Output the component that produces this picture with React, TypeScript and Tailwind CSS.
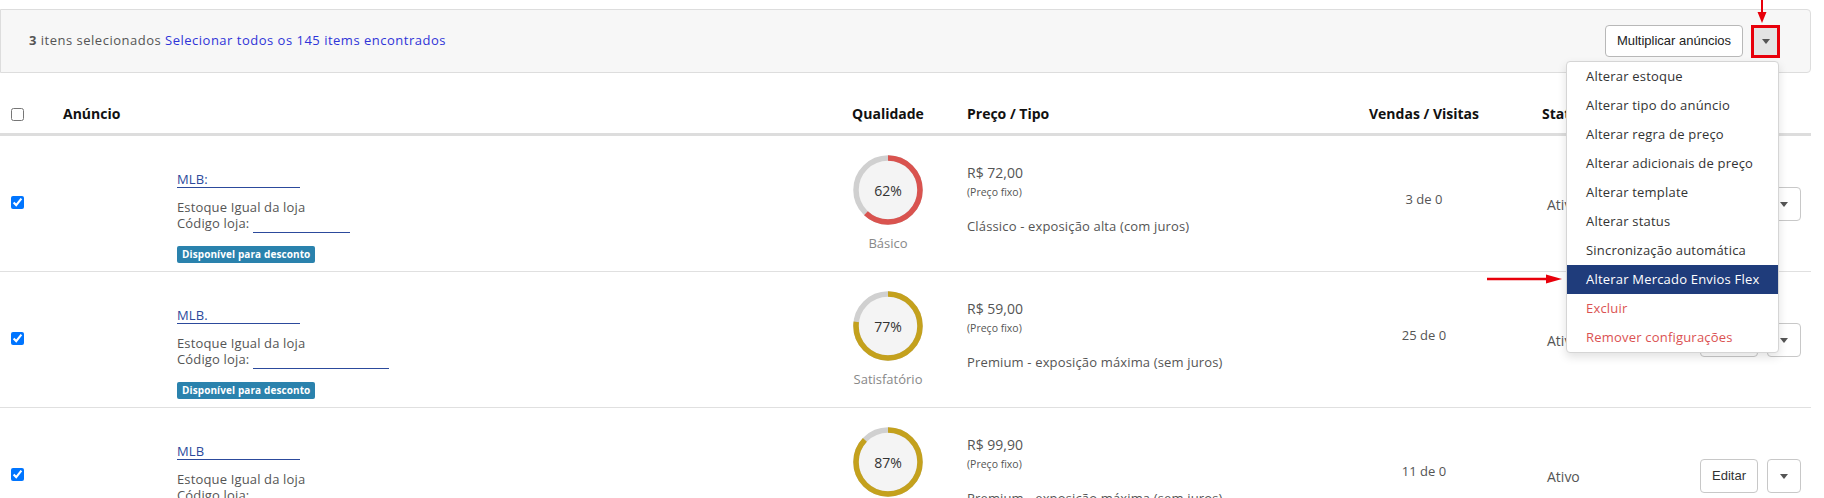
import React from "react";

type Row = {
  mlb: string;
  codeW: number;
  pct: number;
  color: string;
  label: string;
  price: string;
  plan: string;
  vendas: string;
};

const rows: Row[] = [
  {
    mlb: "MLB:",
    codeW: 97,
    pct: 62,
    color: "#d9534f",
    label: "Básico",
    price: "R$ 72,00",
    plan: "Clássico - exposição alta (com juros)",
    vendas: "3 de 0",
  },
  {
    mlb: "MLB.",
    codeW: 136,
    pct: 77,
    color: "#c4a11d",
    label: "Satisfatório",
    price: "R$ 59,00",
    plan: "Premium - exposição máxima (sem juros)",
    vendas: "25 de 0",
  },
  {
    mlb: "MLB",
    codeW: 110,
    pct: 87,
    color: "#c4a11d",
    label: "Satisfatório",
    price: "R$ 99,90",
    plan: "Premium - exposição máxima (sem juros)",
    vendas: "11 de 0",
  },
];

const menuItems: { label: string; kind?: "active" | "danger" }[] = [
  { label: "Alterar estoque" },
  { label: "Alterar tipo do anúncio" },
  { label: "Alterar regra de preço" },
  { label: "Alterar adicionais de preço" },
  { label: "Alterar template" },
  { label: "Alterar status" },
  { label: "Sincronização automática" },
  { label: "Alterar Mercado Envios Flex", kind: "active" },
  { label: "Excluir", kind: "danger" },
  { label: "Remover configurações", kind: "danger" },
];

function Caret() {
  return (
    <span className="block w-0 h-0 border-x-[4px] border-x-transparent border-t-[5px] border-t-[#555]" />
  );
}

function Quality({ pct, color, label }: { pct: number; color: string; label: string }) {
  const r = 32;
  const c = 2 * Math.PI * r;
  return (
    <div className="flex flex-col items-center">
      <div className="grid w-[70px] h-[70px]">
        <svg width="70" height="70" viewBox="0 0 70 70" className="col-start-1 row-start-1">
          <circle cx="35" cy="35" r={r} fill="#f4f4f4" stroke="#d0d0d0" strokeWidth="5.5" />
          <circle
            cx="35"
            cy="35"
            r={r}
            fill="none"
            stroke={color}
            strokeWidth="5.5"
            strokeDasharray={`${(c * pct) / 100} ${c}`}
            transform="rotate(-90 35 35)"
          />
        </svg>
        <span className="col-start-1 row-start-1 flex items-center justify-center text-[14px] text-[#333]">
          {pct}%
        </span>
      </div>
      <div className="mt-[9px] text-[13px] leading-[18px] text-[#888]">{label}</div>
    </div>
  );
}

function TableRow({ row }: { row: Row }) {
  return (
    <div className="flex h-[136px] border-b border-[#e0e0e0]">
      <div className="w-[63px] pl-[11px] pt-[60px]">
        <input type="checkbox" checked readOnly className="block m-0 w-[13px] h-[13px]" />
      </div>
      <div className="w-[780px] flex">
        <div className="w-[114px]" />
        <div className="pt-[34px] text-[13px] text-[#555] tracking-[0.15px]">
          <div>
            <span className="inline-block w-[123px] leading-[15px] border-b border-[#2c4a9c] text-[#2c4a9c]">
              {row.mlb}
            </span>
          </div>
          <div className="mt-[9px] leading-[16px]">Estoque Igual da loja</div>
          <div className="leading-[16px]">
            Código loja:{" "}
            <span
              className="inline-block h-0 border-b border-[#2c4a9c] align-[-5px]"
              style={{ width: row.codeW }}
            />
          </div>
          <div className="mt-[13px] inline-block h-[17px] leading-[17px] px-[5px] rounded-[2px] bg-[#2a82ad] text-white text-[10px] font-bold tracking-[0.1px]">
            Disponível para desconto
          </div>
        </div>
      </div>
      <div className="w-[90px] pt-[19px]">
        <Quality pct={row.pct} color={row.color} label={row.label} />
      </div>
      <div className="w-[436px] pl-[34px] pt-[28px] text-[#555]">
        <div className="text-[14px] leading-[18px]">{row.price}</div>
        <div className="mt-[3px] text-[10.5px] leading-[14px]">(Preço fixo)</div>
        <div className="mt-[18px] text-[13px] leading-[18px] tracking-[0.15px]">{row.plan}</div>
      </div>
      <div className="w-[110px] pt-[54px] text-center text-[13px] leading-[18px] text-[#555]">
        {row.vendas}
      </div>
      <div className="w-[211px] pl-[68px] pt-[60px] text-[14px] leading-[18px] text-[#555]">Ativo</div>
      <div className="pl-[10px] pt-[51px] flex gap-[9px]">
        <button className="w-[58px] h-[34px] bg-white border border-[#c8c8c8] rounded-[4px] text-[13px] text-[#333] font-['Liberation_Sans',Arial,sans-serif]">
          Editar
        </button>
        <button className="w-[34px] h-[34px] bg-white border border-[#c8c8c8] rounded-[4px] flex items-center justify-center">
          <Caret />
        </button>
      </div>
    </div>
  );
}

export default function App() {
  return (
    <div className="relative w-[1824px] h-[498px] overflow-hidden bg-white font-['Open_Sans',sans-serif]">
      <div className="w-[1811px]">
        {/* selection bar */}
        <div className="mt-[9px] h-[64px] bg-[#f7f7f7] border border-[#dddddd] rounded-r-[4px] flex items-center justify-between pl-[28px] pr-[30px]">
          <div className="text-[13px] text-[#555] tracking-[0.5px]">
            <span className="font-bold">3</span> itens selecionados{" "}
            <span className="text-[#2f34d8]">Selecionar todos os 145 items encontrados</span>
          </div>
          <div className="flex items-center gap-[8px]">
            <button className="w-[138px] h-[32px] bg-white border border-[#b8b8b8] rounded-[4px] text-[13px] text-[#222] font-['Liberation_Sans',Arial,sans-serif]">
              Multiplicar anúncios
            </button>
            <button className="w-[29px] h-[33px] bg-[#e4e4e4] border-[3px] border-[#e8000b] flex items-center justify-center">
              <Caret />
            </button>
          </div>
        </div>

        {/* header */}
        <div className="flex h-[63px] border-b-[3px] border-[#dddddd] text-[14px] font-bold text-[#111] leading-[18px]">
          <div className="w-[63px] pl-[11px] pt-[35px]">
            <input type="checkbox" readOnly className="block m-0 w-[13px] h-[13px]" />
          </div>
          <div className="w-[780px] pt-[32px]">Anúncio</div>
          <div className="w-[90px] pt-[32px] text-center">Qualidade</div>
          <div className="w-[436px] pl-[34px] pt-[32px]">Preço / Tipo</div>
          <div className="w-[110px] pt-[32px] text-center">Vendas / Visitas</div>
          <div className="w-[211px] pl-[63px] pt-[32px]">Status</div>
        </div>

        {rows.map((r, i) => (
          <TableRow key={i} row={r} />
        ))}
      </div>

      {/* dropdown menu */}
      <div className="absolute left-[1566px] top-[61px] w-[213px] bg-white border border-[#d5d5d5] rounded-[4px] shadow-[0_4px_10px_rgba(0,0,0,0.12)] text-[13px] tracking-[0.2px]">
        {menuItems.map((m) => (
          <div
            key={m.label}
            className={
              m.kind === "active"
                ? "h-[29px] leading-[29px] pl-[19px] bg-[#1f3c7b] text-white"
                : m.kind === "danger"
                ? "h-[29px] leading-[29px] pl-[19px] text-[#db5252]"
                : "h-[29px] leading-[29px] pl-[19px] text-[#333]"
            }
          >
            {m.label}
          </div>
        ))}
      </div>

      {/* red arrow pointing down */}
      <svg className="absolute left-[1755px] top-0" width="14" height="25" viewBox="0 0 14 25">
        <line x1="7" y1="0" x2="7" y2="16" stroke="#e8000b" strokeWidth="2" />
        <polygon points="2.5,12 11.5,12 7,23" fill="#e8000b" />
      </svg>

      {/* red arrow pointing right */}
      <svg className="absolute left-[1486px] top-[273px]" width="78" height="12" viewBox="0 0 78 12">
        <line x1="1" y1="6" x2="66" y2="6" stroke="#e8000b" strokeWidth="2.5" />
        <polygon points="60,1.5 76,6 60,10.5" fill="#e8000b" />
      </svg>
    </div>
  );
}
